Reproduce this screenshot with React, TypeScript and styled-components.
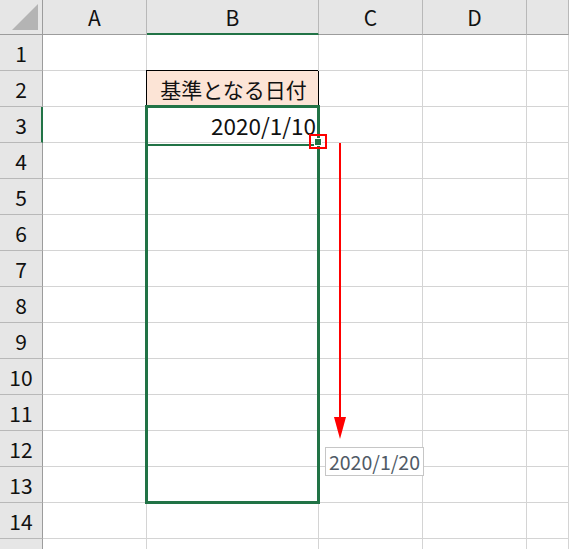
import styled, { createGlobalStyle } from "styled-components";

const columns = ["A", "B", "C", "D", "E"];
const rows = Array.from({ length: 15 }, (_, i) => i + 1);

const GlobalStyle = createGlobalStyle`
    html, body {
        margin: 0;
        padding: 0;
        background: #fff;
        overflow: hidden;
    }
    body {
        font-family: "Noto Sans CJK JP", "Noto Sans", sans-serif;
    }
`;

const App = () => {
    const cellContent = (col: string, row: number) => {
        if (col === "B" && row === 2) return <Cell key={col + row} $label>基準となる日付</Cell>;
        if (col === "B" && row === 3) return <Cell key={col + row} $align="right">2020/1/10</Cell>;
        return <Cell key={col + row} />;
    };

    return (
        <Wrapper>
            <GlobalStyle />
            <Sheet>
                <Corner>
                    <svg width="43" height="34" viewBox="0 0 43 34">
                        <polygon points="38,4 38,30 12,30" fill="#b4b4b4" />
                    </svg>
                </Corner>
                {columns.map((c) => (
                    <ColHeader key={c} $active={c === "B"}>
                        {c === "E" ? "" : c}
                    </ColHeader>
                ))}
                {rows.map((r) => [
                    <RowHeader key={"h" + r} $active={r === 3}>
                        {r}
                    </RowHeader>,
                    ...columns.map((c) => cellContent(c, r)),
                ])}
            </Sheet>

            {/* fill-drag preview drawn over the grid */}
            <Selection>
                <ActiveCell />
            </Selection>
            <FillHandle />
            <Marker />
            <Arrow width="14" height="300" viewBox="0 0 14 300">
                <line x1="7" y1="0" x2="7" y2="280" stroke="#ff0000" strokeWidth="2" />
                <polygon points="1,274 13,274 7,296" fill="#ff0000" />
            </Arrow>
            <Tip>2020/1/20</Tip>
        </Wrapper>
    );
};

const Wrapper = styled.div`
    position: relative;
    width: 569px;
    height: 549px;
    overflow: hidden;
`;

const Sheet = styled.div`
    display: grid;
    grid-template-columns: 43px 104px 172px 104px 104px 1fr;
    grid-template-rows: 35px repeat(15, 36px);
`;

const Corner = styled.div`
    background: #e6e6e6;
    border-right: 1px solid #9c9c9c;
    border-bottom: 1px solid #9c9c9c;
    box-sizing: border-box;
    svg {
        display: block;
    }
`;

const ColHeader = styled.div<{ $active?: boolean }>`
    box-sizing: border-box;
    background: #e6e6e6;
    border-right: 1px solid #b8b8b8;
    border-bottom: ${(p) => (p.$active ? "2px solid #217346" : "1px solid #9c9c9c")};
    display: flex;
    align-items: center;
    justify-content: center;
    padding-top: ${(p) => (p.$active ? "1px" : "0")};
    font-size: 21px;
    color: #111;
`;

const RowHeader = styled.div<{ $active?: boolean }>`
    box-sizing: border-box;
    background: #e6e6e6;
    border-right: ${(p) => (p.$active ? "2px solid #217346" : "1px solid #9c9c9c")};
    border-bottom: 1px solid #b8b8b8;
    display: flex;
    align-items: center;
    justify-content: center;
    padding-left: ${(p) => (p.$active ? "1px" : "0")};
    font-size: 21px;
    color: #111;
`;

const Cell = styled.div<{ $label?: boolean; $align?: "left" | "right" }>`
    box-sizing: border-box;
    border-right: 1px solid ${(p) => (p.$label ? "#000" : "#d4d4d4")};
    border-bottom: 1px solid ${(p) => (p.$label ? "#000" : "#d4d4d4")};
    background: ${(p) => (p.$label ? "#fce4d6" : "#fff")};
    box-shadow: ${(p) => (p.$label ? "-1px -1px 0 0 #000" : "none")};
    display: flex;
    align-items: center;
    justify-content: ${(p) => (p.$label ? "center" : p.$align === "right" ? "flex-end" : "flex-start")};
    padding: 0 2px 0 4px;
    font-size: ${(p) => (p.$label ? "21px" : "22.5px")};
    color: #111;
    white-space: nowrap;
`;

const Selection = styled.div`
    position: absolute;
    left: 145px;
    top: 105px;
    width: 175px;
    height: 399px;
    box-sizing: border-box;
    border: 3px solid #217346;
`;

const ActiveCell = styled.div`
    height: 36px;
    border-bottom: 2px solid #217346;
`;

const FillHandle = styled.div`
    position: absolute;
    left: 315px;
    top: 139px;
    width: 6px;
    height: 6px;
    background: #217346;
    box-shadow: 0 0 0 1px #fff;
`;

const Marker = styled.div`
    position: absolute;
    left: 309px;
    top: 134px;
    width: 18px;
    height: 15px;
    box-sizing: border-box;
    border: 2px solid #ff0000;
`;

const Arrow = styled.svg`
    position: absolute;
    left: 333px;
    top: 143px;
    display: block;
`;

const Tip = styled.div`
    position: absolute;
    left: 325px;
    top: 447px;
    width: 99px;
    height: 29px;
    box-sizing: border-box;
    border: 1px solid #c6c6c6;
    background: #fff;
    display: flex;
    align-items: center;
    justify-content: center;
    font-size: 19.5px;
    color: #505a66;
`;

export default App;
